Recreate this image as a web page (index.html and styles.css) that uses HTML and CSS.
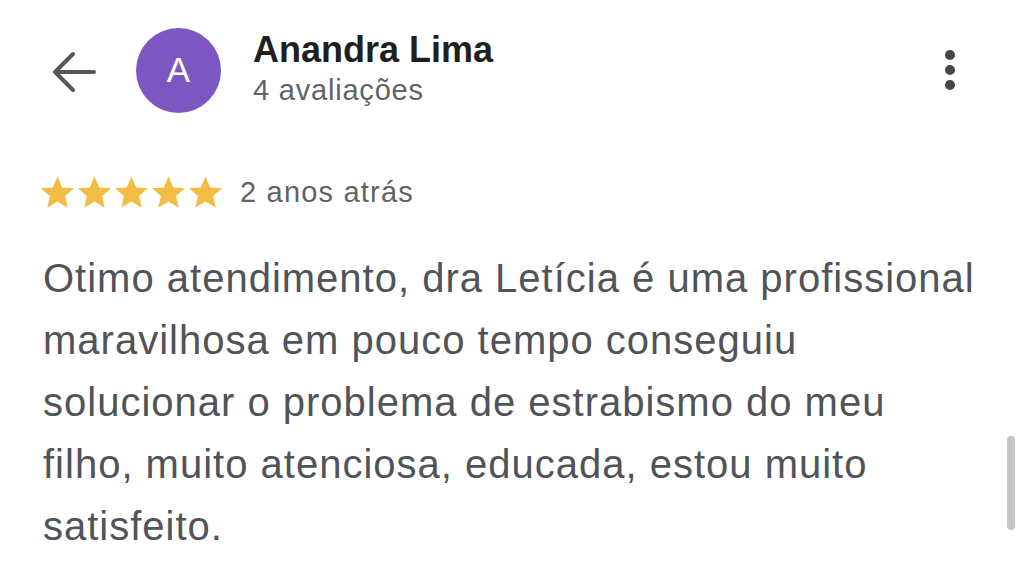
FILE: index.html
```html
<!DOCTYPE html>
<html lang="pt-BR">
  <head>
    <meta charset="UTF-8" />
    <meta name="viewport" content="width=device-width, initial-scale=1.0" />
    <title>Avaliação</title>
    <link rel="stylesheet" href="styles.css">
  </head>
  <body>
    <div class="review-page">
      <header class="rv-header">
        <button class="rv-back" type="button" aria-label="Voltar">
          <svg width="46" height="42" viewBox="0 0 46 42">
            <path d="M42 21H4M21 3L3 21l18 18" fill="none" stroke="#555759" stroke-width="4" stroke-linecap="round" stroke-linejoin="round" />
          </svg>
        </button>
        <div class="rv-avatar">A</div>
        <div class="rv-author">
          <div class="rv-name">Anandra Lima</div>
          <div class="rv-count">4 avaliações</div>
        </div>
        <button class="rv-menu" type="button" aria-label="Mais opções">
          <span></span><span></span><span></span>
        </button>
      </header>

      <div class="rv-meta">
        <div class="rv-stars">
          <svg viewBox="0 0 24 24"><path d="M12 1.6l3.1 7.1 7.7.6-5.9 5 1.8 7.6L12 17.9l-6.7 4 1.8-7.6-5.9-5 7.7-.6z" /></svg>
          <svg viewBox="0 0 24 24"><path d="M12 1.6l3.1 7.1 7.7.6-5.9 5 1.8 7.6L12 17.9l-6.7 4 1.8-7.6-5.9-5 7.7-.6z" /></svg>
          <svg viewBox="0 0 24 24"><path d="M12 1.6l3.1 7.1 7.7.6-5.9 5 1.8 7.6L12 17.9l-6.7 4 1.8-7.6-5.9-5 7.7-.6z" /></svg>
          <svg viewBox="0 0 24 24"><path d="M12 1.6l3.1 7.1 7.7.6-5.9 5 1.8 7.6L12 17.9l-6.7 4 1.8-7.6-5.9-5 7.7-.6z" /></svg>
          <svg viewBox="0 0 24 24"><path d="M12 1.6l3.1 7.1 7.7.6-5.9 5 1.8 7.6L12 17.9l-6.7 4 1.8-7.6-5.9-5 7.7-.6z" /></svg>
        </div>
        <span class="rv-date">2 anos atrás</span>
      </div>

      <p class="rv-text">Otimo atendimento, dra Letícia é uma profissional maravilhosa em pouco tempo conseguiu solucionar o problema de estrabismo do meu filho, muito atenciosa, educada, estou muito satisfeito.</p>

      <div class="rv-scrollbar"></div>
    </div>
  </body>
</html>
```

FILE: styles.css
```css
html,
body {
  margin: 0;
  background: #fff;
}

.review-page {
  position: relative;
  width: 1024px;
  height: 578px;
  overflow: hidden;
  font-family: "Liberation Sans", Arial, sans-serif;
}

.rv-header {
  display: flex;
  align-items: center;
  padding: 28px 0 0 52px;
  height: 84px;
}

.rv-back {
  display: flex;
  border: none;
  background: none;
  padding: 0;
  margin-top: 4px;
}

.rv-avatar {
  width: 85px;
  height: 85px;
  margin-left: 38px;
  border-radius: 50%;
  background: #7d57c1;
  color: #fff;
  font-size: 35px;
  display: flex;
  align-items: center;
  justify-content: center;
}

.rv-author {
  margin-left: 32px;
  margin-top: -2px;
}

.rv-name {
  font-size: 36px;
  font-weight: bold;
  color: #1f1f1f;
  line-height: 42px;
}

.rv-count {
  font-size: 29px;
  letter-spacing: 0.8px;
  color: #5f6368;
  line-height: 38px;
}

.rv-menu {
  margin-left: auto;
  margin-right: 69px;
  display: flex;
  flex-direction: column;
  gap: 5px;
  border: none;
  background: none;
  padding: 0;
}

.rv-menu span {
  width: 10px;
  height: 10px;
  border-radius: 50%;
  background: #444649;
}

.rv-meta {
  display: flex;
  align-items: center;
  padding: 62px 0 0 39px;
}

.rv-stars {
  display: flex;
}

.rv-stars svg {
  width: 37px;
  height: 37px;
  fill: #f2bd42;
}

.rv-date {
  margin-left: 16px;
  font-size: 29px;
  letter-spacing: 1.2px;
  color: #5f6368;
}

.rv-text {
  margin: 36px 36px 0 43px;
  font-size: 40px;
  letter-spacing: 1px;
  line-height: 62px;
  color: #505357;
}

.rv-scrollbar {
  position: absolute;
  right: 9px;
  top: 436px;
  width: 8px;
  height: 94px;
  border-radius: 4px;
  background: #c6c6c6;
}
```
